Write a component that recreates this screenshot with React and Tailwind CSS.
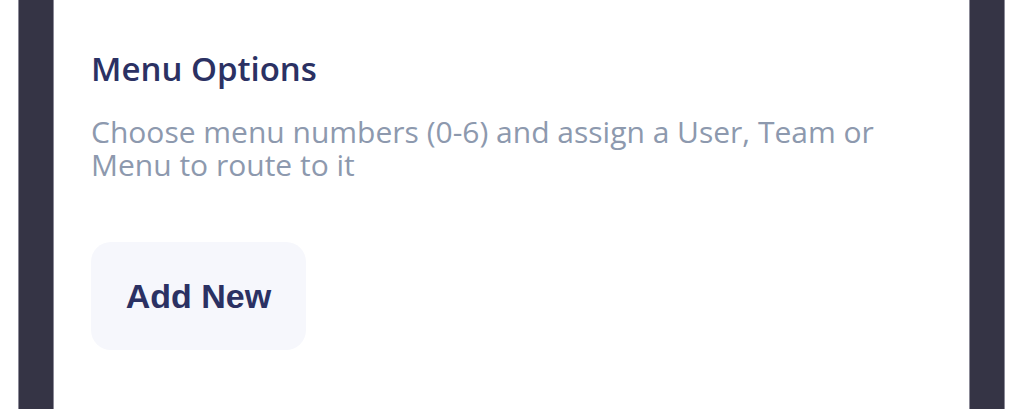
import React from 'react';

export default function App() {
    return (
        <div className="flex h-[409px] w-[1024px] overflow-hidden bg-white">
            <div className="w-[18px] shrink-0 bg-white" />
            <div className="w-[36px] shrink-0 border-x border-[#8b8a97] bg-[#353445]" />

            <div className="flex-1 bg-white pl-[37px] pt-[49px]">
                <h2 className="text-[33px] font-semibold leading-[40px] text-[#2b3163]" style={{ fontFamily: '"Open Sans", sans-serif' }}>
                    Menu Options
                </h2>
                <p className="mt-[26px] w-[810px] text-[30px] leading-[33px] text-[#8d99ae]" style={{ fontFamily: '"Open Sans", sans-serif' }}>
                    Choose menu numbers (0-6) and assign a User, Team or Menu to route to it
                </p>

                <button
                    type="button"
                    className="mt-[61px] flex h-[108px] w-[215px] items-center justify-center rounded-[20px] bg-[#f6f7fc] text-[34px] font-bold text-[#2b3163]"
                    style={{ fontFamily: '"Liberation Sans", Arial, sans-serif' }}
                >
                    Add New
                </button>
            </div>

            <div className="w-[36px] shrink-0 border-x border-[#8b8a97] bg-[#353445]" />
            <div className="w-[19px] shrink-0 bg-white" />
        </div>
    );
}
